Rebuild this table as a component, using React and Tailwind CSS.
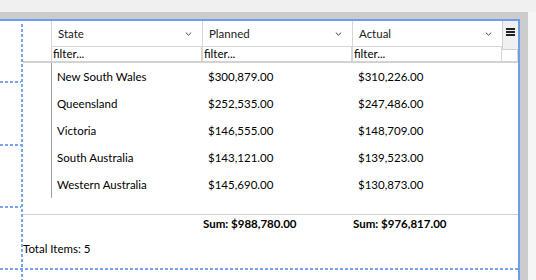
const rows = [
  ["New South Wales", "$300,879.00", "$310,226.00"],
  ["Queensland", "$252,535.00", "$247,486.00"],
  ["Victoria", "$146,555.00", "$148,709.00"],
  ["South Australia", "$143,121.00", "$139,523.00"],
  ["Western Australia", "$145,690.00", "$130,873.00"],
];

function Chevron() {
  return (
    <svg width="7" height="4" viewBox="0 0 7 4" className="shrink-0">
      <path d="M0.8 0.6 L3.5 3.2 L6.2 0.6" fill="none" stroke="#444" strokeWidth="1" />
    </svg>
  );
}

function HeaderCell({ label, w }) {
  return (
    <div className={`${w} h-[25px] border-l border-[#d6d6d6] flex items-center justify-between pl-[6px] pr-[10px] text-[#1a1a1a]`}>
      <span>{label}</span>
      <Chevron />
    </div>
  );
}

function FilterCell({ w }) {
  return (
    <div className={`${w} h-[15px] border-l border-r border-t border-[#d6d6d6] flex items-center pl-[1px] text-black leading-none`}>
      filter...
    </div>
  );
}

export default function App() {
  return (
    <div
      className="w-[536px] h-[280px] bg-[#f5f5f5] overflow-hidden text-[11.5px]"
      style={{ fontFamily: 'Lato, "Open Sans", sans-serif' }}
    >
      <div className="h-[12px] bg-[#f0f0f0]" />
      <div className="w-[528px] h-[268px] bg-[#cccccc] pt-[7px] pr-[8px]">
        <div className="relative h-full bg-white border-t-2 border-r-2 border-[#6d9eeb]">
          <div className="ml-[23px] flex flex-col">
            <div className="flex">
              <div className="w-[28px]" />
              <HeaderCell label="State" w="w-[151px]" />
              <HeaderCell label="Planned" w="w-[150px]" />
              <HeaderCell label="Actual" w="w-[150px]" />
              <div className="w-[16px]" />
            </div>
            <div className="flex">
              <div className="w-[28px]" />
              <FilterCell w="w-[151px]" />
              <FilterCell w="w-[150px]" />
              <FilterCell w="w-[150px]" />
              <div className="w-[16px] h-[15px] border-t border-r border-[#d6d6d6]" />
            </div>
            <div className="h-[2px] bg-[#d2d2d2]" />
            <div className="flex">
              <div className="w-[28px]" />
              <div className="border-l border-[#a0a0a0] flex flex-col">
                {rows.map((r) => (
                  <div key={r[0]} className="flex h-[27px] items-center text-black">
                    <div className="w-[150px] pl-[5px]">{r[0]}</div>
                    <div className="w-[150px] pl-[6px]">{r[1]}</div>
                    <div className="w-[150px] pl-[6px]">{r[2]}</div>
                  </div>
                ))}
              </div>
            </div>
            <div className="h-[16px]" />
            <div className="h-[1px] bg-[#d2d2d2]" />
            <div className="flex h-[17px] items-center font-bold text-black">
              <div className="w-[180px]" />
              <div className="w-[150px]">Sum: $988,780.00</div>
              <div className="w-[150px]">Sum: $976,817.00</div>
            </div>
            <div className="h-[34px] flex items-center text-black">Total Items: 5</div>
          </div>

          {/* grid menu button */}
          <div className="absolute right-0 top-0 w-[16px] h-[29px] bg-[#f0f0f0] border-l border-b border-[#d0d0d0] flex flex-col items-center pt-[7px] gap-[1px]">
            <div className="w-[9px] h-[2px] bg-[#222]" />
            <div className="w-[9px] h-[2px] bg-[#222]" />
            <div className="w-[9px] h-[2px] bg-[#222]" />
          </div>

          {/* designer adorners */}
          <div className="absolute left-[21px] top-[3px] bottom-0 w-[2px] bg-[repeating-linear-gradient(to_bottom,#7aa5ee_0_3px,transparent_3px_5px)]" />
          <div className="absolute left-0 top-[60px] w-[21px] h-[2px] bg-[repeating-linear-gradient(to_right,#7aa5ee_0_3px,transparent_3px_5px)]" />
          <div className="absolute left-0 top-[123px] w-[21px] h-[2px] bg-[repeating-linear-gradient(to_right,#7aa5ee_0_3px,transparent_3px_5px)]" />
          <div className="absolute left-0 top-[185px] w-[21px] h-[2px] bg-[repeating-linear-gradient(to_right,#7aa5ee_0_3px,transparent_3px_5px)]" />
          <div className="absolute left-0 right-0 top-[247px] h-[2px] bg-[repeating-linear-gradient(to_right,#7aa5ee_0_3px,transparent_3px_5px)]" />
        </div>
      </div>
    </div>
  );
}
